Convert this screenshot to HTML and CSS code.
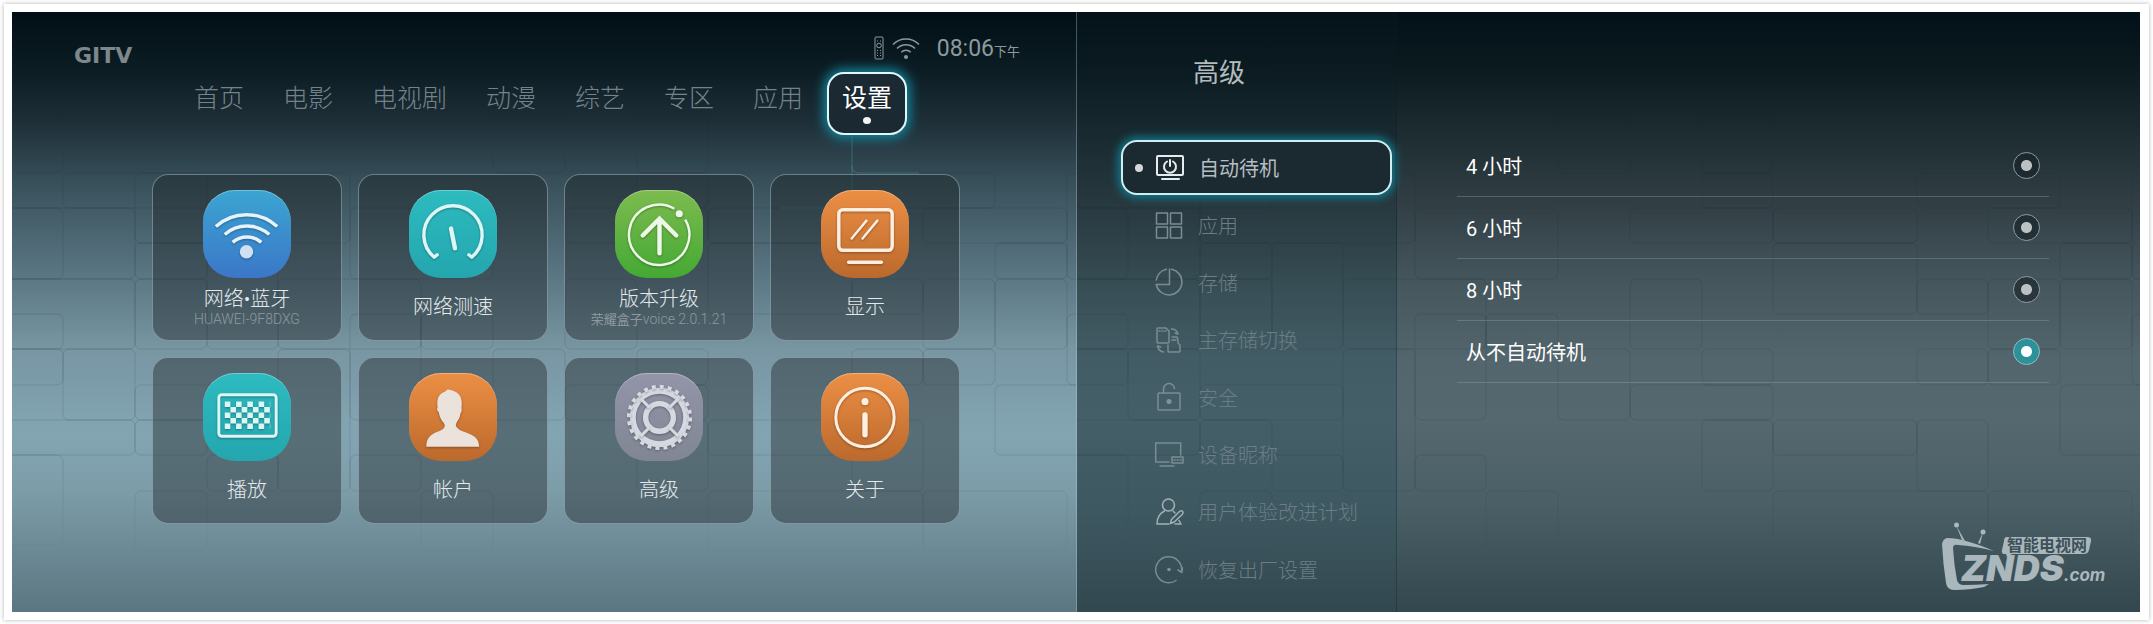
FILE: index.html
```html
<!DOCTYPE html>
<html lang="zh-CN">
<head>
<meta charset="utf-8">
<title>设置 - 高级</title>
<link rel="stylesheet" href="styles.css">
</head>
<body>
<svg class="defs" aria-hidden="true">
  <defs>
    <linearGradient id="fade" x1="0" y1="0" x2="0" y2="1">
      <stop offset="0.16" stop-color="#fff" stop-opacity="0"/>
      <stop offset="0.3" stop-color="#fff"/>
      <stop offset="0.75" stop-color="#fff"/>
      <stop offset="0.93" stop-color="#fff" stop-opacity="0"/>
    </linearGradient>
    <mask id="brick-mask" maskUnits="userSpaceOnUse" x="0" y="0" width="1100" height="600">
      <rect width="1100" height="600" fill="url(#fade)"/>
    </mask>
    <symbol id="bricks" viewBox="0 0 1065 600">
      <g fill="none" stroke="#10262f" stroke-opacity=".13" mask="url(#brick-mask)">
        <rect x="-20" y="90" width="71" height="71" rx="6"/>
        <rect x="51" y="161" width="144" height="35" rx="6"/>
        <rect x="-20" y="196" width="71" height="71" rx="6"/>
        <rect x="-20" y="196" width="143" height="71" rx="6"/>
        <rect x="123" y="161" width="215" height="70" rx="6"/>
        <rect x="123" y="231" width="72" height="36" rx="6"/>
        <rect x="-20" y="267" width="143" height="70" rx="6"/>
        <rect x="-20" y="302" width="71" height="35" rx="6"/>
        <rect x="123" y="267" width="72" height="70" rx="6"/>
        <rect x="195" y="231" width="71" height="106" rx="6"/>
        <rect x="338" y="196" width="143" height="71" rx="6"/>
        <rect x="266" y="267" width="143" height="70" rx="6"/>
        <rect x="338" y="302" width="71" height="106" rx="6"/>
        <rect x="-20" y="337" width="71" height="36" rx="6"/>
        <rect x="51" y="337" width="72" height="71" rx="6"/>
        <rect x="123" y="373" width="143" height="35" rx="6"/>
        <rect x="-20" y="408" width="143" height="35" rx="6"/>
        <rect x="-20" y="443" width="71" height="90" rx="6"/>
        <rect x="123" y="408" width="72" height="35" rx="6"/>
        <rect x="123" y="479" width="72" height="60" rx="6"/>
        <rect x="195" y="443" width="71" height="36" rx="6"/>
        <rect x="266" y="337" width="72" height="142" rx="6"/>
        <rect x="338" y="443" width="71" height="36" rx="6"/>
        <rect x="409" y="479" width="72" height="60" rx="6"/>
        <rect x="409" y="302" width="72" height="35" rx="6"/>
        <rect x="481" y="337" width="72" height="71" rx="6"/>
        <rect x="481" y="100" width="72" height="61" rx="6"/>
        <rect x="625" y="100" width="71" height="61" rx="6"/>
        <rect x="625" y="161" width="71" height="35" rx="6"/>
        <rect x="553" y="196" width="143" height="35" rx="6"/>
        <rect x="696" y="196" width="144" height="35" rx="6"/>
        <rect x="840" y="161" width="143" height="35" rx="6"/>
        <rect x="911" y="196" width="144" height="35" rx="6"/>
        <rect x="983" y="231" width="72" height="36" rx="6"/>
        <rect x="553" y="267" width="72" height="70" rx="6"/>
        <rect x="696" y="231" width="144" height="71" rx="6"/>
        <rect x="840" y="267" width="71" height="35" rx="6"/>
        <rect x="911" y="267" width="72" height="70" rx="6"/>
        <rect x="983" y="267" width="72" height="70" rx="6"/>
        <rect x="625" y="337" width="71" height="36" rx="6"/>
        <rect x="840" y="337" width="71" height="36" rx="6"/>
        <rect x="911" y="337" width="72" height="36" rx="6"/>
        <rect x="553" y="373" width="143" height="35" rx="6"/>
        <rect x="625" y="408" width="71" height="71" rx="6"/>
        <rect x="696" y="408" width="144" height="35" rx="6"/>
        <rect x="840" y="408" width="71" height="71" rx="6"/>
        <rect x="983" y="373" width="90" height="70" rx="6"/>
        <rect x="696" y="479" width="215" height="60" rx="6"/>
        <rect x="911" y="479" width="144" height="60" rx="6"/>
        <rect x="1055" y="161" width="40" height="106" rx="6"/>
        <rect x="1055" y="302" width="40" height="71" rx="6"/>
      </g>
    </symbol>
  </defs>
</svg>

<div class="frame">
  <section class="home">
    <svg class="pattern" aria-hidden="true"><use href="#bricks" width="1065" height="600"/>
      <path d="M840 124v30q0 7 7 7h60M840 154v36M768 196h50" fill="none" stroke="#3f969c" stroke-opacity=".5"/></svg>
    <header class="top">
      <div class="logo">GITV</div>
      <div class="status">
        <svg width="10" height="24" viewBox="0 0 10 24" fill="none" stroke="currentColor" aria-hidden="true">
          <rect x="1" y="1" width="8" height="22" rx="1"/><circle cx="5" cy="9.500" r="2.300"/>
          <path d="M3 5h1M6 5h1M3 14.500h1M6 14.500h1M3 17h1M6 17h1M3 19.500h1M6 19.500h1"/>
        </svg>
        <svg class="wifi" width="28" height="24" viewBox="0 0 28 24" fill="none" stroke="currentColor" stroke-width="1.500" aria-hidden="true">
          <path d="M1 8.500a18 18 0 0 1 26 0M5 12.500a12.500 12.500 0 0 1 18 0M9.300 16.200a6.500 6.500 0 0 1 9.400 0"/><circle cx="14" cy="21" r="2" fill="currentColor" stroke="none"/>
        </svg>
        <time>08:06<small>下午</small></time>
      </div>
    </header>
    <nav class="tabs">
      <a href="#">首页</a><a href="#">电影</a><a href="#">电视剧</a><a href="#">动漫</a><a href="#">综艺</a><a href="#">专区</a><a href="#">应用</a><a href="#" class="current" aria-current="page">设置</a>
    </nav>
    <div class="cards">
      <a class="card" href="#">
        <svg class="tile blue" viewBox="0 0 89 89" fill="none" stroke="#e4f3fc" stroke-width="3.500" aria-hidden="true">
          <path d="M13 37a46 46 0 0 1 62 0M22 45a34 34 0 0 1 45 0M30 53a22 22 0 0 1 29 0"/><circle cx="44" cy="62.500" r="6.800" fill="#cfe0f3" stroke="none"/>
        </svg>
        <span class="text"><span class="name">网络•蓝牙</span><span class="note">HUAWEI-9F8DXG</span></span>
      </a>
      <a class="card" href="#">
        <svg class="tile teal" viewBox="0 0 89 89" fill="none" stroke="#dcf6f6" stroke-width="3.500" stroke-linecap="round" stroke-linejoin="round" aria-hidden="true">
          <path d="M28.500 65.500l-3 2.500A29.500 29.500 0 1 1 63.500 68l-3-2.500"/><path d="M42.500 39l4 20" stroke-width="4.500"/>
        </svg>
        <span class="text"><span class="name">网络测速</span></span>
      </a>
      <a class="card" href="#">
        <svg class="tile green" viewBox="0 0 89 89" fill="none" stroke="#ecf9e6" stroke-width="2.500" aria-hidden="true">
          <path d="M60 19a30.500 30.500 0 1 0 11 11"/><circle cx="65" cy="24" r="3.600" fill="#ecf9e6" stroke="none"/>
          <path d="M45 64V29M28 46l17-17 17 17" stroke-width="4.500" stroke-linecap="round"/>
        </svg>
        <span class="text"><span class="name">版本升级</span><span class="note"><b>荣耀盒子</b>voice 2.0.1.21</span></span>
      </a>
      <a class="card" href="#">
        <svg class="tile orange" viewBox="0 0 89 89" fill="none" stroke="#fdeee0" stroke-width="3.500" stroke-linecap="round" aria-hidden="true">
          <rect x="18" y="20" width="54" height="41" rx="4"/><path d="M28 73h33"/><path d="M31 49l15-18M42 49l15-18" stroke-width="2.500"/>
        </svg>
        <span class="text"><span class="name">显示</span></span>
      </a>
      <a class="card" href="#">
        <svg class="tile teal" viewBox="0 0 89 89" fill="none" stroke="#dcf6f6" stroke-width="3" aria-hidden="true">
          <rect x="16" y="22" width="58" height="42" rx="3"/>
          <path d="M22 31.500h46M22 42.700h46M22 53.900h46" stroke-width="5.600" stroke-dasharray="5.700 5.700"/>
          <path d="M27.700 37.100h46M27.700 48.300h46" stroke-width="5.600" stroke-dasharray="5.700 5.700 5.700 5.700 5.700 5.700 5.700 99"/>
        </svg>
        <span class="text"><span class="name">播放</span></span>
      </a>
      <a class="card" href="#">
        <svg class="tile orange" viewBox="0 0 89 89" fill="#ece2dc" aria-hidden="true">
          <path d="M17.500 74.500c0-8 4-12 10-14.500 5.500-2.500 7.500-3 8.500-6 .6-2-.5-3-2.500-5.500-2-2.800-2.800-6-3.500-9-1.600-1-2-3.500-1-5-1-6 0-11 4-14 1-.8 3-1.500 4-2 .8-1.500 2.500-2 4-1.500 6.500 1 11 4.500 12 10 .5 3 .4 6 0 8.500.8 2 0 4-1 5.500-.5 4-2 6.500-3.500 8.500-1.200 2.500-1.500 3.500-.5 5 2 3 5 3.800 9 5.500 9 3.500 13.500 6 14 14.500z"/>
        </svg>
        <span class="text"><span class="name">帐户</span></span>
      </a>
      <a class="card" href="#">
        <svg class="tile gray" viewBox="0 0 89 89" fill="none" stroke="#d6d9e2" aria-hidden="true">
          <circle cx="45" cy="45" r="27" stroke-width="6"/>
          <circle cx="45" cy="45" r="31" stroke-width="4" stroke-dasharray="4.058 4.058"/>
          <circle cx="45" cy="45" r="14" stroke-width="5.500"/>
          <path d="M35 35l-9-9M55 35l9-9M35 55l-9 9M55 55l9 9" stroke-width="3"/>
        </svg>
        <span class="text"><span class="name">高级</span></span>
      </a>
      <a class="card" href="#">
        <svg class="tile orange" viewBox="0 0 89 89" fill="none" stroke="#fdeee0" aria-hidden="true">
          <circle cx="44.500" cy="45" r="29.500" stroke-width="3"/><circle cx="44.500" cy="29" r="3.600" fill="#fdeee0" stroke="none"/><path d="M44.500 42.500v20" stroke-width="5.500" stroke-linecap="round"/>
        </svg>
        <span class="text"><span class="name">关于</span></span>
      </a>
    </div>
  </section>

  <section class="settings">
    <svg class="pattern" aria-hidden="true"><use href="#bricks" width="1065" height="600"/></svg>
    <aside class="side">
      <h1>高级</h1>
      <nav class="menu">
        <a href="#" class="current" aria-current="page">
          <svg viewBox="0 0 28 28" aria-hidden="true"><rect x="1" y="2" width="26" height="19" rx="1"/><path d="M6 25h17M11 7.500a6 6 0 1 0 6 0M14 6v6"/></svg>自动待机</a>
        <a href="#"><svg viewBox="0 0 28 28" aria-hidden="true"><path d="M1.500 2h11v11h-11zM15.500 2h11v11h-11zM1.500 16h11v11h-11zM15.500 16h11v11h-11z"/></svg>应用</a>
        <a href="#"><svg viewBox="0 0 28 28" aria-hidden="true"><path d="M16.500 1.200a13 13 0 1 1-15.300 15.300H14.500V1M11.500 1.300A13 13 0 0 0 1.300 12"/></svg>存储</a>
        <a href="#"><svg viewBox="0 0 28 28" aria-hidden="true"><path d="M3 2h8l3 3v11q0 1-1 1H3q-1 0-1-1V3q0-1 1-1zM4 5h1M7 5h1M10 5h1M17 11h5l1 3v3l2 2v6q0 1-1 1H14q-1 0-1-1v-6M17 14h4M16.500 3q5 0 6.500 5M23 8l-3-1M2.500 20q1 5 6 6M2.500 20l3 1"/></svg>主存储切换</a>
        <a href="#"><svg viewBox="0 0 28 28" aria-hidden="true"><rect x="3" y="10" width="22" height="17" rx="1"/><path d="M8.500 10V6.500a5.500 5.500 0 0 1 11-1"/><circle class="dot" cx="14" cy="18.500" r="2.500"/></svg>安全</a>
        <a href="#"><svg viewBox="0 0 28 28" aria-hidden="true"><path d="M14 21H.7V2h25v12M5 25h14"/><rect x="17" y="16" width="11" height="6"/><path d="M19 19h1M22 19h1M25 19h1"/></svg>设备昵称</a>
        <a href="#"><svg class="bright" viewBox="0 0 28 28" aria-hidden="true"><circle cx="13.500" cy="7" r="6"/><path d="M14 26H2c0-7 3-11 7.500-13M18 13l2 2M15.500 25.500l1-4 8-8q2-1.500 3.200 0 1 1.500-.5 3l-8 7.500zM24 22.500l2 3.500h-6"/></svg>用户体验改进计划</a>
        <a href="#"><svg viewBox="0 0 28 28" aria-hidden="true"><path d="M21 25.500A13 13 0 1 1 26.500 17M23 15l3.800 2.500.7-4.500"/><circle class="dot" cx="14" cy="14.500" r="1.800"/></svg>恢复出厂设置</a>
      </nav>
    </aside>
    <main class="options">
      <label><span>4 小时</span><input type="radio" name="standby"></label>
      <label><span>6 小时</span><input type="radio" name="standby"></label>
      <label><span>8 小时</span><input type="radio" name="standby"></label>
      <label><span>从不自动待机</span><input type="radio" name="standby" checked></label>
    </main>
    <svg class="watermark" viewBox="0 0 168 70" role="img" aria-label="智能电视网 ZNDS.com">
      <g fill="#aab7bc">
        <path d="M5 16q-4 1-5 6 1 20 4 39 1 7 8 7 16 0 30-3l5-3q-14 1-25 1-6 0-7-5-3-15-4-32 0-4 5-3 16 1 36 6-18-8-36-12-6-1-11-1z"/>
        <circle cx="14.500" cy="3" r="2.500"/><circle cx="41" cy="10" r="2.500"/>
        <path d="M14 3l9 16-3-1zM41 10l-3 12-2-1z"/>
        <path d="M65 15h80q5 0 4 4l-2 9q-1 4-5 4H70l-5 3-1-3h-1q-4 0-3-4l2-9q0-4 3-4z"/>
      </g>
      <text class="wm-cn" x="65" y="29" fill="#3d5159">智能电视网</text>
      <text class="wm-name" x="19" y="59" fill="#aab7bc">ZNDS<tspan class="wm-com">.com</tspan></text>
    </svg>
  </section>
</div>
</body>
</html>
```
FILE: styles.css
```css
* { box-sizing: border-box; }

body {
  margin: 0;
  padding: 4px;
  min-height: 100vh;
  display: flex;
  background: #fefefe;
  font-family: Roboto, "Noto Sans CJK SC", sans-serif;
  font-size: 20px;
  font-weight: 300;
  color: #e4e9ec;
}

a { color: inherit; text-decoration: none; }

.defs { position: absolute; width: 0; height: 0; }

.frame {
  flex: 1;
  display: grid;
  grid-template-columns: minmax(0, 1065fr) minmax(0, 1063fr);
  padding: 8px 9px 8px 8px;
  background: #fff;
  box-shadow: 0 0 4px rgba(0, 0, 0, .3);
}

.home, .settings {
  position: relative;
  isolation: isolate;
  overflow: hidden;
}

.pattern {
  position: absolute;
  inset: 0;
  z-index: -1;
  width: 100%;
  height: 100%;
}

/* home screen */

.home {
  display: flex;
  flex-direction: column;
  border-right: 1px solid rgba(190, 210, 215, .35);
  background: linear-gradient(#000f16, #0d1d24 10%, #1d2e37 18%, #374f59 28%, #5d7986 45%, #7895a2 56%, #83a5b2 70%, #7c9ca8 80%, #5a7681);
}

.top {
  display: flex;
  justify-content: space-between;
  align-items: flex-start;
  height: 60px;
  padding: 24px 56px 0 62px;
  color: #8e999e;
}

.logo {
  padding-top: 8px;
  font: bold 22px/24px "DejaVu Sans", sans-serif;
  color: #7d888c;
}

.status { display: flex; align-items: center; height: 24px; }
.status .wifi { margin: 0 17px 0 8px; }
.status time { font-size: 23px; font-weight: 400; }
.status small { font-size: 13px; }

.tabs {
  display: flex;
  gap: 9px;
  padding-left: 167px;
  font-size: 25px;
  line-height: 32px;
  color: #74838a;
}

.tabs a { height: 63px; padding: 9px 13px; border: 2px solid transparent; }

.tabs .current {
  display: flex;
  flex-direction: column;
  align-items: center;
  gap: 2px;
  border-color: #e2f7fa;
  border-radius: 17px;
  background: #1a2932;
  box-shadow: 0 0 12px 3px #138aa0;
  color: #fff;
  font-weight: 400;
}

.tabs .current::after {
  content: "";
  width: 8px;
  height: 8px;
  border-radius: 50%;
  background: #f2f5f6;
}

.cards {
  display: grid;
  grid-template-columns: repeat(4, minmax(0, 1fr));
  gap: 16px;
  padding: 39px 116px 40px 140px;
}

.card {
  display: flex;
  flex-direction: column;
  align-items: center;
  min-height: 167px;
  padding: 15px 8px 4px;
  border: 1px solid rgba(190, 212, 220, .45);
  border-radius: 16px;
  background: rgba(24, 29, 33, .4);
}

.tile {
  width: 88px;
  height: 88px;
  border-radius: 32px;
  box-shadow: inset 0 1px 0 rgba(255, 255, 255, .3);
}

.tile > * { filter: drop-shadow(0 1px 1px rgba(0, 0, 0, .3)); }

.blue { background: linear-gradient(#3ba5d2, #3b77c8); }
.teal { background: linear-gradient(#2dbbc0, #24a6ae); }
.green { background: linear-gradient(#7dbb50, #44a933); }
.orange { background: linear-gradient(#ec8f45, #bb692c); }
.gray { background: linear-gradient(#9395a8, #808694); }

.text {
  flex: 1;
  display: flex;
  flex-direction: column;
  justify-content: center;
  align-items: center;
}

.name { line-height: 24px; }
.note { font-size: 14px; line-height: 16px; color: #8d999e; }
.note b { font-size: 13px; font-weight: 400; }

/* settings screen */

.settings {
  display: grid;
  grid-template-columns: minmax(0, 320fr) minmax(0, 743fr);
  background: linear-gradient(#021117, #0c1b20 10%, #1d2c31 20%, #334147 33%, #46585e 46%, #54666d 58%, #55686f 68%, #4b5f66 82%, #33474f);
}

.side {
  display: flex;
  flex-direction: column;
  padding: 42px 4px 13px 44px;
  border-right: 1px solid rgba(10, 25, 32, .3);
  background: linear-gradient(rgba(8, 26, 33, .25), rgba(10, 40, 50, .25) 40%, rgba(20, 68, 84, .27) 60%, rgba(20, 68, 84, .25) 80%, rgba(40, 70, 80, .1));
}

h1 {
  margin: 0 0 48px 72px;
  font-size: 26px;
  line-height: 38px;
  font-weight: 400;
  color: #b4bbbe;
}

.menu { flex: 1; display: grid; grid-auto-rows: 1fr; color: #6b7d85; }

.menu a {
  display: flex;
  align-items: center;
  gap: 15px;
  margin-bottom: 2px;
  padding-left: 32px;
  border: 2px solid transparent;
  border-radius: 16px;
}

.menu svg {
  width: 28px;
  height: 28px;
  fill: none;
  stroke: #7b8c94;
  stroke-width: 1.5;
  stroke-linejoin: round;
  stroke-linecap: round;
  overflow: visible;
}

.menu .dot { fill: #82929a; stroke: none; }
.menu .bright { stroke: #a3b0b6; }

.menu .current {
  gap: 13px;
  padding-left: 12px;
  border-color: #cdeef3;
  background: #1b2930;
  box-shadow: 0 0 8px 3px #14788c;
  color: #b5bec2;
  font-weight: 400;
}

.menu .current svg { stroke: #e6ebed; stroke-width: 2; margin-right: 2px; }

.menu .current::before {
  content: "";
  width: 8px;
  height: 8px;
  border-radius: 50%;
  background: #d3d8da;
}

.options { padding: 123px 91px 0 60px; color: #fff; font-weight: 400; }

.options label {
  display: flex;
  justify-content: space-between;
  align-items: center;
  height: 62px;
  padding: 0 9px;
  border-bottom: 1px solid rgba(140, 160, 167, .4);
}

.options input {
  appearance: none;
  width: 27px;
  height: 27px;
  margin: 0;
  border: 1px solid #8f9b9f;
  border-radius: 50%;
  background: radial-gradient(circle, #bcc2c4 5px, rgba(20, 32, 38, .6) 6px);
}

.options input:checked {
  border-color: #8fc0c4;
  background: radial-gradient(circle, #fff 5px, #2c9198 6px);
}

.watermark {
  position: absolute;
  right: 30px;
  bottom: 20px;
  width: 168px;
  height: 70px;
  overflow: visible;
}

.wm-cn { font: bold 16px "Noto Sans CJK SC", sans-serif; }
.wm-name { font: italic 900 36px Inter, "Liberation Sans", sans-serif; }
.wm-com { font-size: 17px; font-weight: 700; }
```
